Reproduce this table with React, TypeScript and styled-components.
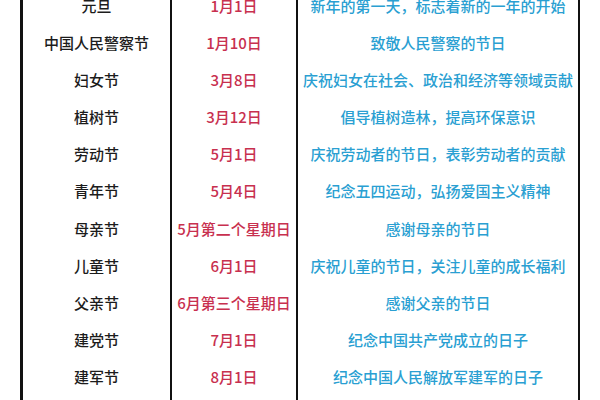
import React from 'react';
import styled, { createGlobalStyle } from 'styled-components';

type Holiday = {
  name: string;
  date: string;
  note: string;
};

const holidays: Holiday[] = [
  { name: '元旦', date: '1月1日', note: '新年的第一天，标志着新的一年的开始' },
  { name: '中国人民警察节', date: '1月10日', note: '致敬人民警察的节日' },
  { name: '妇女节', date: '3月8日', note: '庆祝妇女在社会、政治和经济等领域贡献' },
  { name: '植树节', date: '3月12日', note: '倡导植树造林，提高环保意识' },
  { name: '劳动节', date: '5月1日', note: '庆祝劳动者的节日，表彰劳动者的贡献' },
  { name: '青年节', date: '5月4日', note: '纪念五四运动，弘扬爱国主义精神' },
  { name: '母亲节', date: '5月第二个星期日', note: '感谢母亲的节日' },
  { name: '儿童节', date: '6月1日', note: '庆祝儿童的节日，关注儿童的成长福利' },
  { name: '父亲节', date: '6月第三个星期日', note: '感谢父亲的节日' },
  { name: '建党节', date: '7月1日', note: '纪念中国共产党成立的日子' },
  { name: '建军节', date: '8月1日', note: '纪念中国人民解放军建军的日子' },
];

const GlobalStyle = createGlobalStyle`
  html, body {
    margin: 0;
    padding: 0;
    background: #ffffff;
    overflow: hidden;
  }
  body {
    font-family: "Noto Sans CJK SC", "Liberation Sans", sans-serif;
  }
`;

const Page = styled.div`
  width: 600px;
  height: 400px;
  overflow: hidden;
`;

// the table is scrolled so the first row is cut at the top
const Table = styled.div`
  box-sizing: border-box;
  width: 560px;
  min-height: 430px;
  margin: -13.6px 0 0 20px;
  border-left: 3px solid #111;
  border-right: 2px solid #111;
  display: grid;
  grid-template-columns: 149px 126px 1fr;
  grid-auto-rows: 37.2px;
  align-content: start;
`;

const Cell = styled.div<{ $tone: 'name' | 'date' | 'note'; $divider?: boolean }>`
  display: flex;
  align-items: center;
  justify-content: center;
  white-space: nowrap;
  font-size: 15px;
  font-weight: 500;
  color: ${p => (p.$tone === 'name' ? '#1c1c1c' : p.$tone === 'date' ? '#c8304f' : '#2a9fd2')};
  border-right: ${p => (p.$divider ? '2px solid #111' : 'none')};
`;

const Filler = styled.div<{ $divider?: boolean }>`
  border-right: ${p => (p.$divider ? '2px solid #111' : 'none')};
`;

const App: React.FC = () => {
  return (
    <Page>
      <GlobalStyle />
      <Table>
        {holidays.map(h => (
          <React.Fragment key={h.name}>
            <Cell $tone="name" $divider>{h.name}</Cell>
            <Cell $tone="date" $divider>{h.date}</Cell>
            <Cell $tone="note">{h.note}</Cell>
          </React.Fragment>
        ))}
        <Filler $divider />
        <Filler $divider />
        <Filler />
      </Table>
    </Page>
  );
};

export default App;
